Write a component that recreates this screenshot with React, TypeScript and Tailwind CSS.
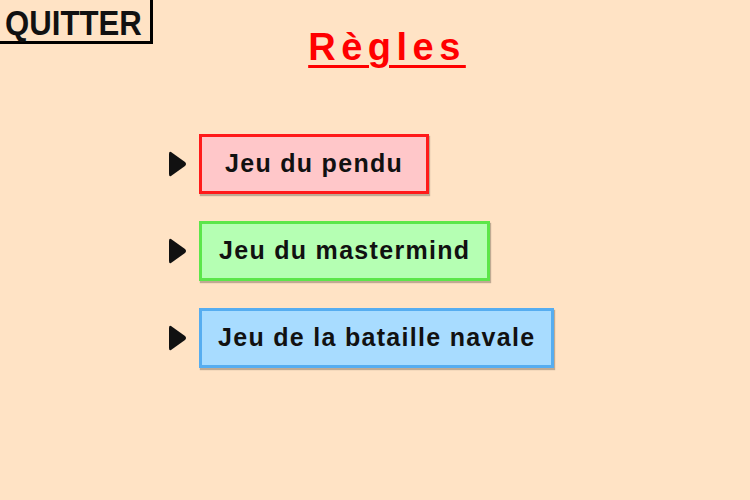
export default function App() {
  const games = [
    { label: "Jeu du pendu", box: "px-[23px] bg-[#ffc7c9] border-[#ff1a1a]" },
    { label: "Jeu du mastermind", box: "px-[17px] bg-[#b5ffb3] border-[#5ce64a]" },
    { label: "Jeu de la bataille navale", box: "px-[16px] bg-[#a8dcff] border-[#56adf0]" },
  ];

  return (
    <main className="w-[750px] h-[500px] bg-[#ffe3c5] relative font-['Liberation_Sans',sans-serif] overflow-hidden">
      {/* Quit button */}
      <button className="absolute left-0 top-0 w-[153px] h-[44px] border-r-[3px] border-b-[3px] border-black flex items-center pl-[5px] pt-[3px]">
        <span className="text-[35px] font-bold text-[#111] leading-none scale-x-[0.89] origin-left">
          QUITTER
        </span>
      </button>

      {/* Title */}
      <h1 className="pt-[24px] pl-[24px] text-center text-[38px] font-bold text-[#ff0000] leading-tight">
        <span className="underline underline-offset-[5px] decoration-[3px] tracking-[5.5px]">
          Règles
        </span>
      </h1>

      {/* Game list */}
      <ul className="mt-[62px] ml-[168px] flex flex-col gap-[27px]">
        {games.map((game, index) => (
          <li key={index} className="flex items-center gap-[12px]">
            <svg width="19" height="30" viewBox="0 0 19 30">
              <path
                d="M3 3 Q1 2 1 5 L1 25 Q1 28 3 27 L17 17 Q19 15 17 13 Z"
                fill="#111"
              />
            </svg>
            <div
              className={`h-[60px] border-[3px] flex items-center shadow-[1px_2px_1px_rgba(0,0,0,0.25)] ${game.box}`}
            >
              <span className="text-[25px] font-bold text-[#111] tracking-[1.3px] leading-none">
                {game.label}
              </span>
            </div>
          </li>
        ))}
      </ul>
    </main>
  );
}
